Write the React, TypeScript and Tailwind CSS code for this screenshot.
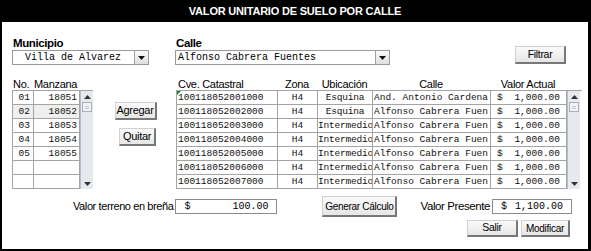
import React from 'react';

const sans = "font-['Liberation_Sans',Arial,sans-serif]";
const mono = "font-['Liberation_Mono','Courier_New',monospace]";

const manzanas = [
  { no: '01', mz: '18051' },
  { no: '02', mz: '18052' },
  { no: '03', mz: '18053' },
  { no: '04', mz: '18054' },
  { no: '05', mz: '18055' },
  { no: '', mz: '' },
  { no: '', mz: '' },
];

const predios = [
  { cve: '100118052001000', ubic: 'Esquina', calle: 'And. Antonio Cardena' },
  { cve: '100118052002000', ubic: 'Esquina', calle: 'Alfonso Cabrera Fuen' },
  { cve: '100118052003000', ubic: 'Intermedio', calle: 'Alfonso Cabrera Fuen' },
  { cve: '100118052004000', ubic: 'Intermedio', calle: 'Alfonso Cabrera Fuen' },
  { cve: '100118052005000', ubic: 'Intermedio', calle: 'Alfonso Cabrera Fuen' },
  { cve: '100118052006000', ubic: 'Intermedio', calle: 'Alfonso Cabrera Fuen' },
  { cve: '100118052007000', ubic: 'Intermedio', calle: 'Alfonso Cabrera Fuen' },
];

function Btn({ children, className }: { children: React.ReactNode; className?: string }) {
  return (
    <button
      className={`${sans} flex items-center justify-center text-[10.5px] tracking-[-0.3px] text-black bg-linear-to-b from-[#fbfbfb] to-[#e6e6e6] border border-[#d0d0d0] border-r-2 border-b-2 border-r-[#777] border-b-[#777] ${className ?? ''}`}
    >
      {children}
    </button>
  );
}

function DropArrow() {
  return (
    <div className="w-[14px] h-full flex items-center justify-center bg-linear-to-b from-[#fafafa] to-[#dedede] border-l border-[#a0a0a0]">
      <svg width="7" height="4" viewBox="0 0 7 4">
        <path d="M0 0h7L3.5 4z" fill="#111" />
      </svg>
    </div>
  );
}

function Select({ value, className, center }: { value: string; className: string; center?: boolean }) {
  return (
    <div className={`flex h-[15px] bg-white border border-[#9a9a9a] ${className}`}>
      <div className={`${mono} flex-1 text-[10px] leading-[13px] text-black ${center ? 'pl-[12px]' : 'pl-[2px]'}`}>{value}</div>
      <DropArrow />
    </div>
  );
}

function ScrollBar() {
  return (
    <div className="w-[13px] flex flex-col bg-[#e6e9ee] border-l border-[#b8bec6]">
      <div className="h-[11px] flex items-center justify-center">
        <svg width="7" height="4" viewBox="0 0 7 4">
          <path d="M0 4h7L3.5 0z" fill="#333" />
        </svg>
      </div>
      <div className="mx-[1px] h-[10px] bg-[#f0f2f5] border border-[#a9b0b8] flex flex-col justify-center gap-[1px] px-[2px]">
        <div className="h-px bg-[#c4c9cf]" />
        <div className="h-px bg-[#c4c9cf]" />
      </div>
      <div className="flex-1" />
      <div className="h-[11px] flex items-center justify-center">
        <svg width="7" height="4" viewBox="0 0 7 4">
          <path d="M0 0h7L3.5 4z" fill="#333" />
        </svg>
      </div>
    </div>
  );
}

function MoneyBox({ value, className }: { value: string; className: string }) {
  return (
    <div className={`${mono} flex justify-between items-center h-[15px] bg-white border border-[#8a8a8a] text-[10px] text-black px-[8px] ${className}`}>
      <span>$</span>
      <span>{value}</span>
    </div>
  );
}

export default function App() {
  const cell = `${mono} text-[9.5px] leading-[13px] h-[14px] border-b border-r border-[#a4a4a4] text-[#111] overflow-hidden whitespace-nowrap`;
  const head = `${sans} text-[11px] leading-[12px] tracking-[-0.3px] text-black`;

  return (
    <div className={`${sans} w-[591px] h-[251px] bg-white border-l-2 border-r-[3px] border-b-2 border-black flex flex-col`}>
      <div className="h-[22px] bg-black flex items-center justify-center">
        <span className="text-white font-bold text-[11px] tracking-[-0.2px]">VALOR UNITARIO DE SUELO POR CALLE</span>
      </div>

      <div className="flex items-end mt-[16px]">
        <div className="ml-[10px]">
          <div className="font-bold text-[11.5px] leading-[11px] tracking-[-0.4px] text-black pl-[1px] mb-[1px]">Municipio</div>
          <Select value="Villa de Alvarez" className="w-[137px]" center />
        </div>
        <div className="ml-[26px]">
          <div className="font-bold text-[11.5px] leading-[11px] tracking-[-0.4px] text-black pl-[1px] mb-[1px]">Calle</div>
          <Select value="Alfonso Cabrera Fuentes" className="w-[215px]" />
        </div>
        <Btn className="ml-auto mr-[22px] w-[51px] h-[18px] mb-[1px]">Filtrar</Btn>
      </div>

      <div className="flex mt-[13px]">
        <div className="ml-[10px] w-[81px]">
          <div className={`${head} flex h-[12px]`}>
            <span className="pl-[1px] w-[22px]">No.</span>
            <span>Manzana</span>
          </div>
          <div className="flex border-l border-t border-[#a4a4a4]">
            <div className="flex flex-col">
              {manzanas.map((m, i) => (
                <div key={i} className={`flex ${i === 1 ? 'bg-[#efefef]' : 'bg-white'}`}>
                  <div className={`${cell} w-[21px] text-right pr-[3px]`}>{m.no}</div>
                  <div className={`${cell} w-[46px] text-right pr-[2px]`}>{m.mz}</div>
                </div>
              ))}
            </div>
            <ScrollBar />
          </div>
        </div>

        <div className="flex flex-col items-center w-[83px] pt-[24px] gap-[8px] pl-[2px]">
          <Btn className="w-[42px] h-[18px] text-[11px]">Agregar</Btn>
          <Btn className="w-[37px] h-[18px] text-[11px] ml-[4px]">Quitar</Btn>
        </div>

        <div className="w-[406px]">
          <div className={`${head} flex h-[12px]`}>
            <span className="w-[101px] pl-[2px]">Cve. Catastral</span>
            <span className="w-[40px] text-center">Zona</span>
            <span className="w-[55px] text-center">Ubicación</span>
            <span className="w-[118px] text-center">Calle</span>
            <span className="w-[76px] text-center">Valor Actual</span>
          </div>
          <div className="relative flex border-l border-t border-[#a4a4a4]">
            <div className="absolute left-0 top-0 w-0 h-0 border-t-[4px] border-r-[4px] border-t-[#1f8a2c] border-r-transparent" />
            <div className="flex flex-col">
              {predios.map((p, i) => (
                <div key={i} className="flex bg-white">
                  <div className={`${cell} w-[101px] pl-[1px]`}>{p.cve}</div>
                  <div className={`${cell} w-[40px] text-center`}>H4</div>
                  <div className={`${cell} w-[55px] text-center tracking-[-0.2px]`}>{p.ubic}</div>
                  <div className={`${cell} w-[118px] pl-[1px]`}>{p.calle}</div>
                  <div className={`${cell} w-[76px] flex justify-between px-[6px]`}>
                    <span>$</span>
                    <span>1,000.00</span>
                  </div>
                </div>
              ))}
            </div>
            <ScrollBar />
          </div>
        </div>
      </div>

      <div className="flex items-center mt-[7px]">
        <span className="ml-[71px] text-[11px] tracking-[-0.4px] text-black">Valor terreno en breña</span>
        <MoneyBox value="100.00" className="ml-[2px] w-[102px]" />
        <Btn className="ml-[45px] w-[75px] h-[21px] text-[10px]">Generar Cálculo</Btn>
        <span className="ml-[23px] text-[11.5px] tracking-[-0.4px] text-black">Valor Presente</span>
        <MoneyBox value="1,100.00" className="ml-[2px] w-[80px]" />
      </div>

      <div className="flex justify-end mt-[3px] mr-[18px] gap-[3px]">
        <Btn className="w-[51px] h-[17px] text-[10.5px]">Salir</Btn>
        <Btn className="w-[49px] h-[17px] text-[10px]">Modificar</Btn>
      </div>
    </div>
  );
}
